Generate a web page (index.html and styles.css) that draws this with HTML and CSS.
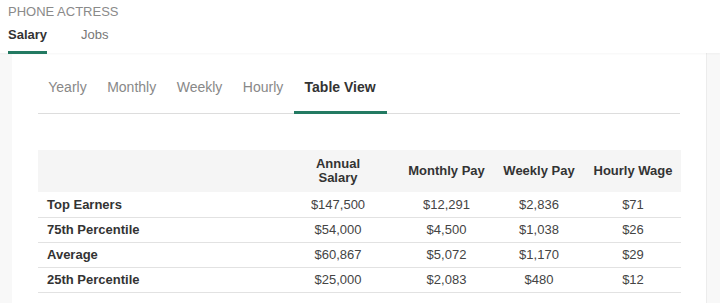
FILE: index.html
```html
<!DOCTYPE html>
<html lang="en">

<head>
    <meta charset="UTF-8">
    <meta name="viewport" content="width=device-width, initial-scale=1.0">
    <title>Phone Actress Salary</title>
    <link rel="stylesheet" href="styles.css">
</head>

<body>
    <div class="header">
        <div class="title">PHONE ACTRESS</div>
        <div class="tabs">
            <div class="tab active">Salary</div>
            <div class="tab">Jobs</div>
        </div>
    </div>
    <div class="card">
        <div class="subtabs">
            <div class="sub">Yearly</div>
            <div class="sub">Monthly</div>
            <div class="sub">Weekly</div>
            <div class="sub">Hourly</div>
            <div class="sub active">Table View</div>
        </div>
        <table class="pay">
            <thead>
                <tr>
                    <th class="label"></th>
                    <th class="c2">Annual<br>Salary</th>
                    <th class="c3">Monthly Pay</th>
                    <th class="c4">Weekly Pay</th>
                    <th class="c5">Hourly Wage</th>
                </tr>
            </thead>
            <tbody>
                <tr>
                    <td class="label">Top Earners</td>
                    <td>$147,500</td>
                    <td>$12,291</td>
                    <td>$2,836</td>
                    <td>$71</td>
                </tr>
                <tr>
                    <td class="label">75th Percentile</td>
                    <td>$54,000</td>
                    <td>$4,500</td>
                    <td>$1,038</td>
                    <td>$26</td>
                </tr>
                <tr>
                    <td class="label">Average</td>
                    <td>$60,867</td>
                    <td>$5,072</td>
                    <td>$1,170</td>
                    <td>$29</td>
                </tr>
                <tr>
                    <td class="label">25th Percentile</td>
                    <td>$25,000</td>
                    <td>$2,083</td>
                    <td>$480</td>
                    <td>$12</td>
                </tr>
            </tbody>
        </table>
    </div>
</body>

</html>
```

FILE: styles.css
```css
body {
    margin: 0px;
    background-color: #f8f8f8;
    height: 303px;
    overflow: hidden;
}

* {
    font-family: 'Liberation Sans', Arial, sans-serif;
    box-sizing: border-box;
}

.header {
    background-color: #ffffff;
    height: 53px;
    padding: 4px 0 0 8px;
    box-shadow: rgba(0, 0, 0, 0.04) 0px 1px 2px;
    position: relative;
    z-index: 1;
}

.title {
    font-size: 13px;
    color: #8a8a8a;
    line-height: 15px;
}

.tabs {
    display: flex;
    gap: 34px;
    margin-top: 8px;
}

.tab {
    font-size: 13px;
    color: #777777;
    line-height: 15px;
    padding-bottom: 9px;
    border-bottom: 3px solid transparent;
}

.tab.active {
    color: #333333;
    font-weight: bold;
    border-bottom-color: #237a62;
}

.card {
    background-color: #ffffff;
    margin-left: 12px;
    width: 695px;
    height: 260px;
    border-right: 1px solid #ececec;
    padding: 0 26px;
}

.subtabs {
    display: flex;
    padding-top: 26px;
    border-bottom: 1px solid #dddddd;
}

.sub {
    font-size: 14px;
    color: #888888;
    line-height: 16px;
    padding: 0 10.25px 16px 10.25px;
    border-bottom: 3px solid transparent;
    margin-bottom: -1px;
}

.sub.active {
    color: #333333;
    font-weight: bold;
    padding: 0 11px 16px 11px;
    border-bottom-color: #237a62;
}

.pay {
    width: 643px;
    margin-top: 36px;
    border-collapse: collapse;
    table-layout: fixed;
    font-size: 13px;
}

.pay thead tr {
    background-color: #f5f5f5;
    height: 42px;
}

.pay th {
    font-weight: bold;
    color: #333333;
    line-height: 14px;
    text-align: center;
    padding: 0;
}

.pay td {
    color: #444444;
    text-align: center;
    height: 25px;
    padding: 0;
    border-bottom: 1px solid #e2e2e2;
}

.pay td.label {
    text-align: left;
    font-weight: bold;
    color: #333333;
    padding-left: 9px;
}

.pay th.label {
    width: 238px;
}

.c2 {
    width: 124px;
}

.c3 {
    width: 93px;
}

.c4 {
    width: 92px;
}

.c5 {
    width: 96px;
}
```
